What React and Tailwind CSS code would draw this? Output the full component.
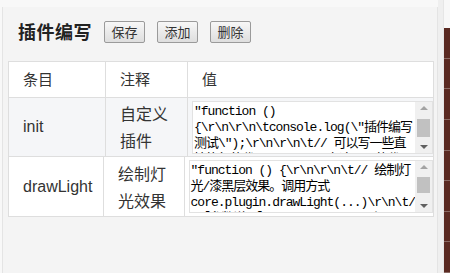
import React from "react";

const rows = [
  {
    name: "init",
    note: ["自定义", "插件"],
    lines: [
      "\"function ()",
      "{\\r\\n\\r\\n\\tconsole.log(\\\"插件编写",
      "测试\\\");\\r\\n\\r\\n\\t// 可以写一些直",
      "接执行的代码\\r\\n\\t// 在这里写的代"
    ],
    bg: "bg-[#f5f6f8]",
    thumb: "top-[17px] h-[18px]"
  },
  {
    name: "drawLight",
    note: ["绘制灯", "光效果"],
    lines: [
      "\"function () {\\r\\n\\r\\n\\t// 绘制灯",
      "光/漆黑层效果。调用方式",
      "core.plugin.drawLight(...)\\r\\n\\t/",
      "/【参数说明】\\r\\n\\t// name: 必"
    ],
    bg: "bg-white",
    thumb: "top-[16px] h-[16px]"
  }
];

function ScrollBar({ thumb }) {
  return (
    <div className="relative w-[17px] h-full bg-[#f0f0f0]">
      <span className="absolute top-[4px] left-[5px] w-0 h-0 border-x-[4px] border-x-transparent border-b-[4px] border-b-[#a3a3a3]" />
      <div className={"absolute left-[2px] w-[13px] bg-[#c1c1c1] " + thumb} />
      <span className="absolute bottom-[4px] left-[5px] w-0 h-0 border-x-[4px] border-x-transparent border-t-[4px] border-t-[#606060]" />
    </div>
  );
}

function App() {
  return (
    <div
      className="w-[450px] h-[273px] overflow-hidden bg-[#f8f8f8] flex"
      style={{ fontFamily: "'Noto Sans CJK SC', sans-serif" }}
    >
      <div className="w-[436px] mt-[7px] ml-[2px] border-l border-r border-[#e4e4e4] bg-[#f4f4f4] pl-[5px] pr-[3px]">

        {/* cabecera */}
        <div className="flex items-center h-[37px] mt-[6px] pl-[10px]">
          <h1 className="text-[18px] font-bold text-[#222] tracking-[0.5px] mr-[12px]">
            插件编写
          </h1>
          {["保存", "添加", "删除"].map((label) => (
            <button
              key={label}
              className="w-[41px] h-[22px] mr-[12px] text-[13px] leading-none text-[#333] border border-[#9a9a9a] rounded-[2px] bg-gradient-to-b from-[#f7f7f7] to-[#dedede]"
            >
              {label}
            </button>
          ))}
        </div>

        {/* tabla */}
        <div className="mt-[11px] w-[426px] border border-[#dedede] bg-white text-[#333]">
          <div className="flex h-[36px] items-center text-[15px] border-b border-[#dedede]">
            <div className="w-[97px] h-full flex items-center pl-[14px] border-r border-[#dedede]">条目</div>
            <div className="w-[82px] h-full flex items-center pl-[14px] border-r border-[#dedede]">注释</div>
            <div className="flex-1 h-full flex items-center pl-[14px]">值</div>
          </div>

          {rows.map((row, i) => (
            <div
              key={row.name}
              className={"flex h-[59px] " + row.bg + (i === 0 ? " border-b border-[#dedede]" : "")}
            >
              <div
                className="w-[97px] flex items-center pl-[14px] text-[16px] border-r border-[#dedede]"
                style={{ fontFamily: "'Liberation Sans', 'Noto Sans CJK SC', sans-serif" }}
              >
                {row.name}
              </div>
              <div className="w-[82px] flex flex-col justify-center pl-[14px] text-[16px] leading-[27px] border-r border-[#dedede]">
                {row.note.map((n) => (
                  <span key={n}>{n}</span>
                ))}
              </div>
              <div className="flex-1 pl-[4px] pt-[3px] pb-[3px]">
                <div className="flex h-[53px] bg-white border border-[#e2e2e2]">
                  <div
                    className="flex-1 overflow-hidden pl-[1px] pt-[2px] text-[13px] leading-[16px] tracking-[-1px] text-black whitespace-pre"
                    style={{ fontFamily: "'Liberation Mono', 'Noto Sans CJK SC', monospace" }}
                  >
                    {row.lines.map((l, k) => (
                      <div key={k}>{l}</div>
                    ))}
                  </div>
                  <ScrollBar thumb={row.thumb} />
                </div>
              </div>
            </div>
          ))}
        </div>
      </div>

      {/* borde derecho */}
      <div className="flex-1 flex">
        <div className="w-[6px] bg-[#efefef] border-r border-[#e6e6e6]" />
        <div className="flex-1 mt-[28px] flex flex-col bg-[#5a2a22]">
          {[0, 1, 2, 3, 4, 5, 6, 7].map((k) => (
            <div key={k} className="h-[32px] border-b border-[#8a6a64]" />
          ))}
        </div>
      </div>
    </div>
  );
}

export default App;
